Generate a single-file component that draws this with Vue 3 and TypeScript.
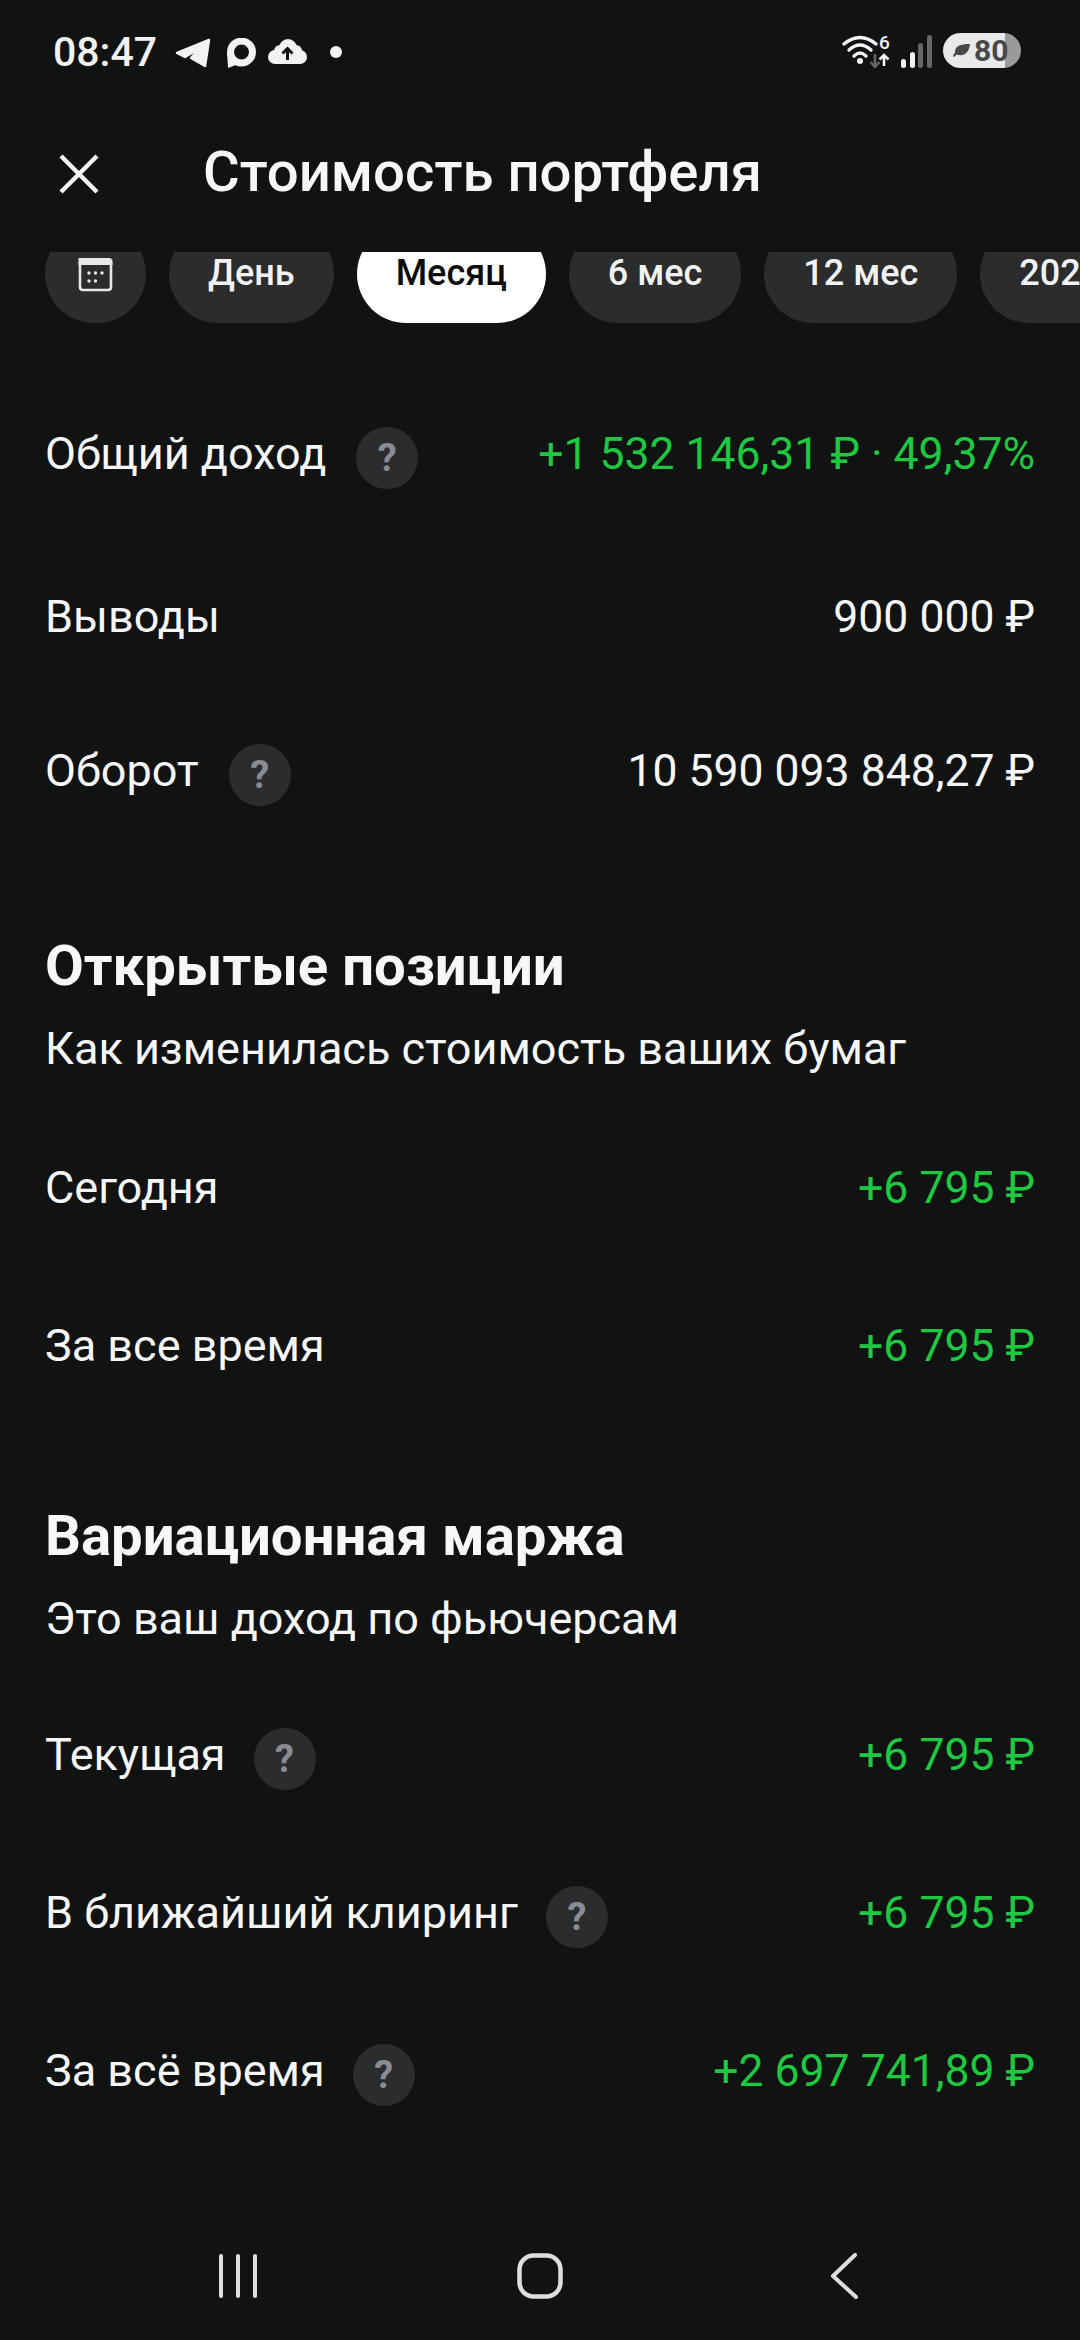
<script setup lang="ts">
interface Row { label: string; value: string; green?: boolean; help?: boolean }
const chips = ['День', 'Месяц', '6 мес', '12 мес', '2025']
const top: Row[] = [
  { label: 'Общий доход', value: '+1 532 146,31 ₽ · 49,37%', green: true, help: true },
  { label: 'Выводы', value: '900 000 ₽' },
  { label: 'Оборот', value: '10 590 093 848,27 ₽', help: true },
]
const open: Row[] = [
  { label: 'Сегодня', value: '+6 795 ₽', green: true },
  { label: 'За все время', value: '+6 795 ₽', green: true },
]
const margin: Row[] = [
  { label: 'Текущая', value: '+6 795 ₽', green: true, help: true },
  { label: 'В ближайший клиринг', value: '+6 795 ₽', green: true, help: true },
  { label: 'За всё время', value: '+2 697 741,89 ₽', green: true, help: true },
]
</script>

<template>
  <div class="page">
    <div class="status">
      <span class="time">08:47</span>
      <svg class="tg" width="36" height="30" viewBox="0 0 36 30"><path d="M2 15 L34 2 L30 28 L16 20 L25 10 L10 19 Z" fill="#f2f2f2" stroke="#f2f2f2" stroke-width="2.5" stroke-linejoin="round"/></svg>
      <svg class="ring" width="30" height="30" viewBox="0 0 30 30"><circle cx="15.5" cy="14" r="11" fill="none" stroke="#f2f2f2" stroke-width="7"/><path d="M1 14 L2 29 Q2 30 3.5 29.5 L12 26 L6 18 Z" fill="#f2f2f2"/></svg>
      <svg class="cloud" width="39" height="26" viewBox="0 0 39 26"><g fill="#f2f2f2"><circle cx="7" cy="18" r="7"/><circle cx="12" cy="12" r="6"/><circle cx="20" cy="9" r="9"/><circle cx="28" cy="12" r="6"/><circle cx="32" cy="18" r="7"/><rect x="7" y="15" width="25" height="10"/></g><path d="M19.5 21 V10 M14.5 14.5 L19.5 9.5 L24.5 14.5" fill="none" stroke="#111212" stroke-width="3"/></svg>
      <span class="dot"></span>
      <span class="spacer"></span>
      <svg class="wifi" width="48" height="37" viewBox="0 -4 48 37">
        <g fill="none" stroke="#f2f2f2" stroke-width="3.4" stroke-linecap="round">
          <path d="M2 9 Q18 -4 34 9"/>
          <path d="M7 15 Q18 5 29 15"/>
          <path d="M12 21 Q18 15 24 21"/>
        </g>
        <circle cx="18" cy="26" r="3" fill="#f2f2f2"/>
        <path d="M33 19 V32 M28.5 27 L33 32 L37.5 27" fill="none" stroke="#666" stroke-width="2.6"/>
        <path d="M42 31 V20 M37.5 24.5 L42 20 L46.5 24.5" fill="none" stroke="#f2f2f2" stroke-width="2.6"/>
        <text x="37" y="13.5" class="six">6</text>
      </svg>
      <svg class="signal" width="31" height="33" viewBox="0 0 31 33">
        <rect x="0" y="24" width="5" height="9" rx="2.5" fill="#f2f2f2"/>
        <rect x="9" y="17" width="5" height="16" rx="2.5" fill="#f2f2f2"/>
        <rect x="17" y="8" width="5" height="25" rx="2.5" fill="#666"/>
        <rect x="26" y="0" width="5" height="33" rx="2.5" fill="#666"/>
      </svg>
      <div class="battery">
        <svg width="18" height="14" viewBox="0 0 18 14"><path d="M18 0 C8 0 3 2 3 8 L1 12 L2.5 13 L4.5 10.5 C12 13 17 9 18 0 Z" fill="#48484c"/></svg>
        <span>80</span>
      </div>
    </div>

    <div class="header">
      <svg class="close" width="40" height="40" viewBox="0 0 40 40"><path d="M2 2 L38 38 M38 2 L2 38" stroke="#f5f5f5" stroke-width="4.4" fill="none"/></svg>
      <h1 class="title">Стоимость портфеля</h1>
    </div>

    <div class="chips-clip">
      <div class="chips">
        <div class="chip cal">
          <svg width="37" height="35" viewBox="0 0 37 35">
            <path d="M3 6 H34 V30 Q34 33 31 33 H6 Q3 33 3 30 Z" fill="none" stroke="#e8e8e8" stroke-width="2.6"/>
            <path d="M1.5 1 H32 Q35.5 1 35.5 4.5 V8 H1.5 Z" fill="#e8e8e8"/>
            <g fill="#e8e8e8"><circle cx="12" cy="16" r="1.7"/><circle cx="18.5" cy="16" r="1.7"/><circle cx="25" cy="16" r="1.7"/><circle cx="12" cy="24" r="1.7"/><circle cx="18.5" cy="24" r="1.7"/></g>
          </svg>
        </div>
        <div v-for="c in chips" :key="c" class="chip" :class="{ active: c === 'Месяц' }">{{ c }}</div>
      </div>
    </div>

    <div class="group group-top">
      <div v-for="r in top" :key="r.label" class="row">
        <span class="label">{{ r.label }}</span>
        <span v-if="r.help" class="help">?</span>
        <span class="value" :class="{ green: r.green }">{{ r.value }}</span>
      </div>
    </div>

    <h2 class="heading first">Открытые позиции</h2>
    <p class="sub">Как изменилась стоимость ваших бумаг</p>
    <div class="group group-open">
      <div v-for="r in open" :key="r.label" class="row">
        <span class="label">{{ r.label }}</span>
        <span class="value" :class="{ green: r.green }">{{ r.value }}</span>
      </div>
    </div>

    <h2 class="heading second">Вариационная маржа</h2>
    <p class="sub">Это ваш доход по фьючерсам</p>
    <div class="group group-margin">
      <div v-for="r in margin" :key="r.label" class="row">
        <span class="label">{{ r.label }}</span>
        <span v-if="r.help" class="help">?</span>
        <span class="value" :class="{ green: r.green }">{{ r.value }}</span>
      </div>
    </div>

    <div class="nav">
      <svg class="nav-bars" width="40" height="44" viewBox="0 0 40 44"><path d="M3 2 V42 M20 2 V42 M37 2 V42" stroke="#dedede" stroke-width="4" stroke-linecap="round"/></svg>
      <svg class="nav-home" width="46" height="46" viewBox="0 0 46 46"><rect x="2.5" y="2.5" width="41" height="41" rx="14" fill="none" stroke="#dedede" stroke-width="4.5"/></svg>
      <svg class="nav-back" width="28" height="46" viewBox="0 0 28 46"><path d="M25 2 L3 23 L26 44" fill="none" stroke="#dedede" stroke-width="4" stroke-linecap="round" stroke-linejoin="round"/></svg>
    </div>
  </div>
</template>

<style>
html, body { margin: 0; background: #111212; }
</style>

<style scoped>
.page {
  width: 1080px;
  height: 2340px;
  overflow: hidden;
  background: #111212;
  color: #f7f7f7;
  font-family: Roboto, "Noto Sans", sans-serif;
  display: flex;
  flex-direction: column;
}
.status {
  height: 104px;
  padding: 0 59px 0 53px;
  display: flex;
  align-items: center;
  box-sizing: border-box;
  flex: none;
}
.time { font-size: 41px; font-weight: 500; color: #f2f2f2; width: 104px; }
.tg { margin-left: 18px; margin-top: 2px; }
.ring { margin-left: 15px; margin-top: 2px; }
.cloud { margin-left: 12px; }
.dot { width: 12px; height: 12px; border-radius: 50%; background: #f2f2f2; margin-left: 23px; }
.spacer { flex: 1; }
.wifi { margin-top: -5px; }
.six { font: 500 19px Roboto, sans-serif; fill: #f2f2f2; }
.signal { margin-left: 11px; margin-top: -1px; }
.battery {
  margin-left: 11px;
  margin-top: -3px;
  width: 78px;
  height: 35px;
  border-radius: 18px;
  background: linear-gradient(90deg, #e9e9e9 62px, #9a9a9a 62px);
  display: flex;
  align-items: center;
  box-sizing: border-box;
  padding-left: 9px;
  color: #48484c;
  font-size: 30px;
  font-weight: 700;
}
.battery span { margin-left: 4px; }
.header {
  height: 148px;
  flex: none;
  display: flex;
  align-items: flex-start;
  padding-left: 59px;
  box-sizing: border-box;
}
.close { margin-top: 50px; }
.title {
  margin: 38px 0 0 104px;
  font-size: 56.3px;
  line-height: 60px;
  font-weight: 500;
}
.chips-clip { height: 71px; overflow: hidden; flex: none; }
.chips {
  margin-top: -27px;
  padding-left: 45px;
  display: flex;
  gap: 23px;
  width: 1400px;
}
.chip {
  height: 98px;
  padding: 0 39px 2px;
  box-sizing: border-box;
  border-radius: 49px;
  background: #2b2c2d;
  display: flex;
  align-items: center;
  justify-content: center;
  font-size: 36px;
  font-weight: 500;
  color: #f2f2f2;
  flex: none;
}
.chip.cal { width: 101px; padding: 0; align-items: flex-start; padding-top: 32px; }
.chip.active { background: #fff; color: #0c0c0c; }
.group { display: flex; flex-direction: column; padding: 0 45px; }
.row {
  height: 60px;
  display: flex;
  align-items: center;
  font-size: 45px;
  line-height: 60px;
}
.label { color: #f7f7f7; }
.help {
  width: 62px;
  height: 62px;
  border-radius: 50%;
  background: #2b2c2e;
  color: #8a8b93;
  font-size: 38px;
  font-weight: 700;
  margin-left: 30px;
  margin-top: 8px;
  display: flex;
  align-items: center;
  justify-content: center;
  flex: none;
}
.value { margin-left: auto; color: #f7f7f7; white-space: nowrap; font-size: 44.5px; }
.value.green { color: #1ec840; }
.group-top { margin-top: 101px; }
.group-top .row:nth-child(2) { margin-top: 103px; }
.group-top .row:nth-child(3) { margin-top: 94px; }
.heading { margin: 0; padding-left: 45px; font-size: 56.3px; line-height: 60px; font-weight: 700; }
.heading.first { margin-top: 135px; }
.heading.second { margin-top: 130px; }
.sub { margin: 23px 0 0; padding-left: 45px; font-size: 45px; line-height: 60px; }
.group-open { margin-top: 79px; }
.group-open .row + .row { margin-top: 98px; }
.group-margin { margin-top: 76px; }
.group-margin .row + .row { margin-top: 98px; }
.group-margin .help { margin-left: 28px; }
.nav {
  margin-top: 152px;
  padding-left: 218px;
  display: flex;
  align-items: center;
  height: 46px;
}
.nav-home { margin-left: 259px; }
.nav-back { margin-left: 267px; }
</style>
